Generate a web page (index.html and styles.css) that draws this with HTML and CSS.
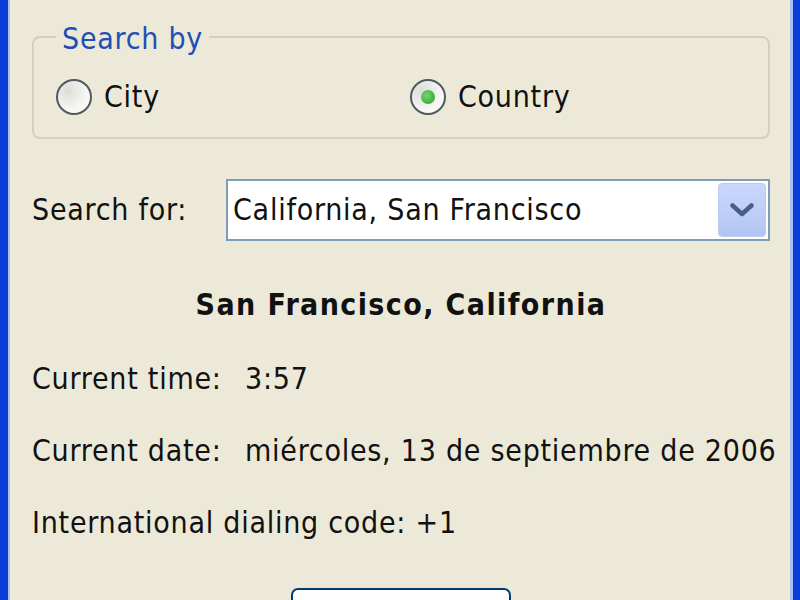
FILE: index.html
```html
<!doctype html>
<html lang="en">
  <head>
    <meta charset="UTF-8" />
    <meta name="viewport" content="width=device-width, initial-scale=1.0" />
    <title>World Time</title>
    <link rel="stylesheet" href="styles.css">
  </head>
  <body>
    <div class="window">
      <div class="content">
        <fieldset class="group">
          <legend>Search by</legend>
          <div class="options">
            <label class="option">
              <span class="radio"></span>
              <span>City</span>
            </label>
            <label class="option">
              <span class="radio checked"></span>
              <span>Country</span>
            </label>
          </div>
        </fieldset>

        <div class="search-row">
          <span class="search-label">Search for:</span>
          <div class="combo">
            <span class="combo-text">California, San Francisco</span>
            <span class="combo-button">
              <svg width="24" height="14" viewBox="0 0 24 14">
                <path d="M2.5 2.5 L12 11 L21.5 2.5" fill="none" stroke="#4a5f86" stroke-width="4.5" stroke-linecap="round" stroke-linejoin="round" />
              </svg>
            </span>
          </div>
        </div>

        <h1 class="place">San Francisco, California</h1>

        <div class="info">
          <p><span class="info-label">Current time:</span>3:57</p>
          <p><span class="info-label">Current date:</span>miércoles, 13 de septiembre de 2006</p>
          <p>International dialing code: +1</p>
        </div>

        <div class="actions">
          <button class="close-button" aria-label="Close"></button>
        </div>
      </div>
    </div>
  </body>
</html>
```

FILE: styles.css
```css
:root {
  --face: #ece9d8;
  --frame-blue: #0a3ed6;
  --frame-light: #a9bff0;
  --text: #111111;
  --group-border: #d3d0bf;
  --group-text: #1f4fb5;
  --field-border: #7f9db9;
}

html,
body {
  margin: 0;
  padding: 0;
  height: 100%;
  overflow: hidden;
}

body {
  background-color: var(--face);
  color: var(--text);
  font-family: "DejaVu Sans Condensed", "DejaVu Sans", sans-serif;
  font-stretch: semi-condensed;
  font-size: 30px;
  line-height: 36px;
  letter-spacing: 0.75px;
}

.window {
  height: 100%;
  border-left: 8px solid var(--frame-blue);
  border-right: 7px solid var(--frame-blue);
  box-shadow: inset 2px 0 0 var(--frame-light), inset -3px 0 0 var(--frame-light);
  box-sizing: border-box;
}

.content {
  padding: 22px 23px 0 24px;
}

.group {
  margin: 0;
  padding: 27px 22px 22px;
  border: 2px solid var(--group-border);
  border-radius: 8px;
}

.group legend {
  padding: 0 6px;
  line-height: 30px;
  color: var(--group-text);
  position: relative;
  top: 2px;
}

.options {
  display: grid;
  grid-template-columns: 354px 1fr;
}

.option {
  display: flex;
  align-items: center;
  gap: 12px;
}

.radio {
  width: 32px;
  height: 32px;
  border: 2px solid #4f5a63;
  border-radius: 50%;
  background: radial-gradient(circle at 30% 30%, #dcdcd8, #f6f6f2 60%, #ffffff);
  display: flex;
  align-items: center;
  justify-content: center;
}

.radio.checked::after {
  content: "";
  width: 14px;
  height: 14px;
  border-radius: 50%;
  background: radial-gradient(circle at 40% 40%, #6fd86a, #2b9e2b);
}

.search-row {
  display: flex;
  align-items: center;
  margin-top: 40px;
}

.search-label {
  width: 194px;
  flex-shrink: 0;
}

.combo {
  flex: 1;
  height: 62px;
  display: flex;
  align-items: center;
  justify-content: space-between;
  background: #ffffff;
  border: 2px solid var(--field-border);
  box-sizing: border-box;
  padding: 0 2px 0 5px;
}

.combo-button {
  width: 48px;
  height: 54px;
  border-radius: 4px;
  border: 1px solid #bccbef;
  box-sizing: border-box;
  background: linear-gradient(180deg, #cad7fb 0%, #bccdf6 60%, #b2c5f3 100%);
  display: flex;
  align-items: center;
  justify-content: center;
}

.place {
  margin: 46px 0 0;
  font-size: 30px;
  line-height: 36px;
  font-weight: bold;
  letter-spacing: 1.4px;
  text-align: center;
}

.info {
  margin-top: 38px;
}

.info p {
  margin: 0 0 36px;
  white-space: nowrap;
}

.info p:last-child {
  margin-bottom: 0;
}

.info-label {
  display: inline-block;
  width: 213px;
}

.actions {
  display: flex;
  justify-content: center;
  margin-top: 47px;
}

.close-button {
  width: 220px;
  height: 60px;
  border: 2px solid #003c74;
  border-radius: 7px;
  background: linear-gradient(180deg, #ffffff, #f0f0ea);
  font: inherit;
  color: var(--text);
}
```
